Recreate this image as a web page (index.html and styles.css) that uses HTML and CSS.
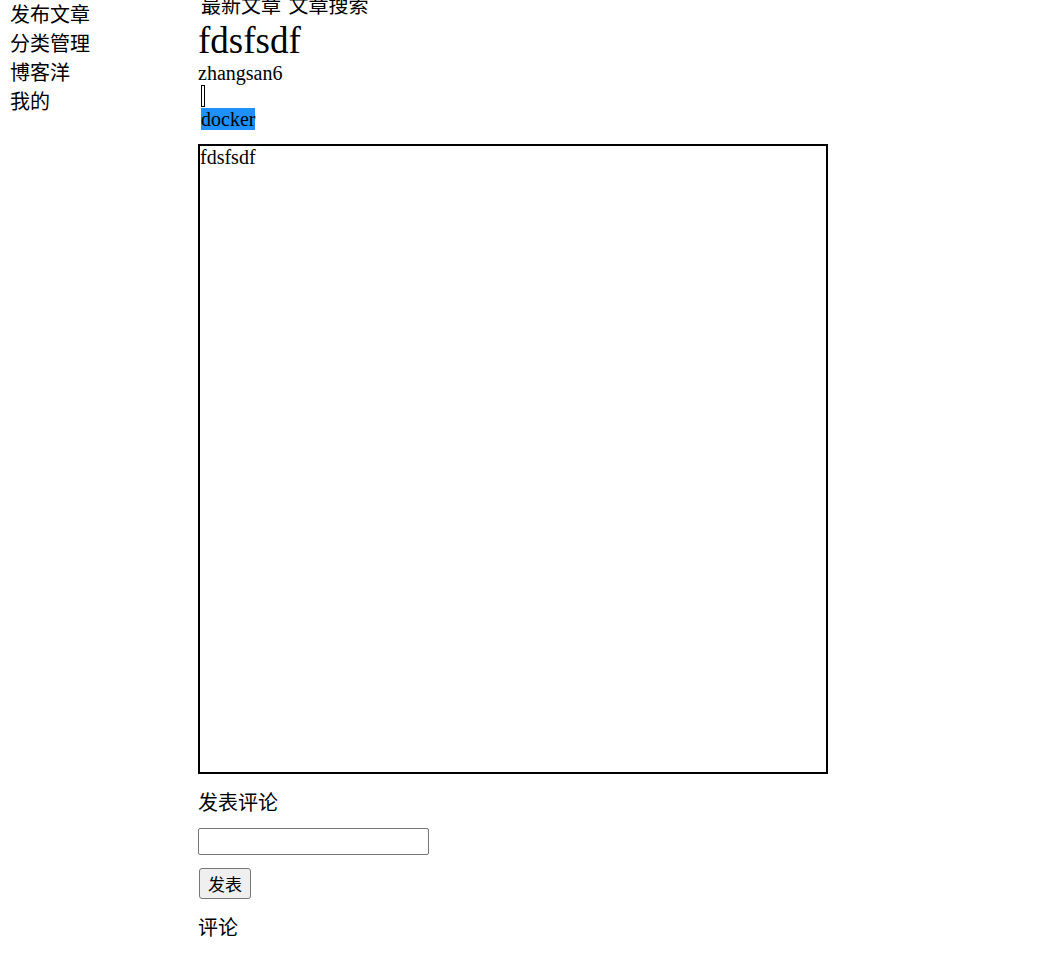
FILE: index.html
```html
<!DOCTYPE html>
<html lang="zh">
<head>
<meta charset="utf-8">
<title>fdsfsdf</title>
<link rel="stylesheet" href="styles.css">
</head>
<body>
<div class="layout">
  <ul class="sidebar">
    <li>发布文章</li>
    <li>分类管理</li>
    <li>博客洋</li>
    <li>我的</li>
  </ul>
  <div class="main">
    <div class="nav"><span>最新文章</span> <span>文章搜索</span></div>
    <h1 class="title">fdsfsdf</h1>
    <div class="author">zhangsan6</div>
    <div class="marker"></div>
    <div class="tags"><span class="tag">docker</span></div>
    <div class="content">fdsfsdf</div>
    <div class="comment-head">发表评论</div>
    <input class="comment-input" type="text">
    <button class="comment-btn" type="button">发表</button>
    <div class="comment-list">评论</div>
  </div>
</div>
</body>
</html>
```
FILE: styles.css
```css
html, body {
  margin: 0;
  padding: 0;
  background: #fff;
  color: #000;
}
.layout {
  display: flex;
  align-items: flex-start;
}
.sidebar {
  list-style: none;
  margin: -1px 0 0;
  padding: 0 0 0 10px;
  width: 188px;
  font-family: "Noto Sans CJK SC", "Noto Sans", sans-serif;
  font-size: 20px;
  line-height: 29px;
}
.main {
  display: flex;
  flex-direction: column;
  align-items: flex-start;
  font-family: "Liberation Serif", "Noto Sans CJK SC", serif;
  font-size: 20px;
}
.nav {
  margin-top: -10px;
  padding-left: 3px;
  height: 29px;
  font-family: "Noto Sans CJK SC", sans-serif;
  font-size: 20px;
  line-height: 29px;
  white-space: pre;
  word-spacing: 3px;
}
.title {
  margin: 0;
  font-size: 37px;
  font-weight: normal;
  line-height: 43px;
}
.author {
  font-size: 20px;
  line-height: 23px;
}
.marker {
  margin-left: 3px;
  box-sizing: border-box;
  width: 4px;
  height: 22px;
  border: 1px solid #000;
  background: #fff;
}
.tags {
  margin: 1px 0 0 3px;
  line-height: 22px;
}
.tag {
  display: inline-block;
  background: #1e90ff;
  font-size: 20px;
  line-height: 22px;
  padding: 0;
}
.content {
  margin-top: 14px;
  box-sizing: border-box;
  width: 630px;
  height: 630px;
  border: 2px solid #000;
  font-size: 20px;
  line-height: 23px;
}
.comment-head {
  margin-top: 13px;
  font-family: "Noto Sans CJK SC", sans-serif;
  font-size: 20px;
  line-height: 29px;
}
.comment-input {
  margin: 12px 0 0;
  box-sizing: border-box;
  width: 231px;
  height: 27px;
  border: 1px solid #767676;
  border-radius: 2px;
  padding: 1px 2px;
  background: #fff;
}
.comment-btn {
  margin: 13px 0 0 1px;
  box-sizing: border-box;
  width: 52px;
  height: 31px;
  padding: 0;
  border: 1px solid #767676;
  border-radius: 3px;
  background: #efefef;
  color: #000;
  font-family: "Noto Sans CJK SC", sans-serif;
  font-size: 17px;
}
.comment-list {
  margin-top: 13px;
  font-family: "Noto Sans CJK SC", sans-serif;
  font-size: 20px;
  line-height: 29px;
}
```
